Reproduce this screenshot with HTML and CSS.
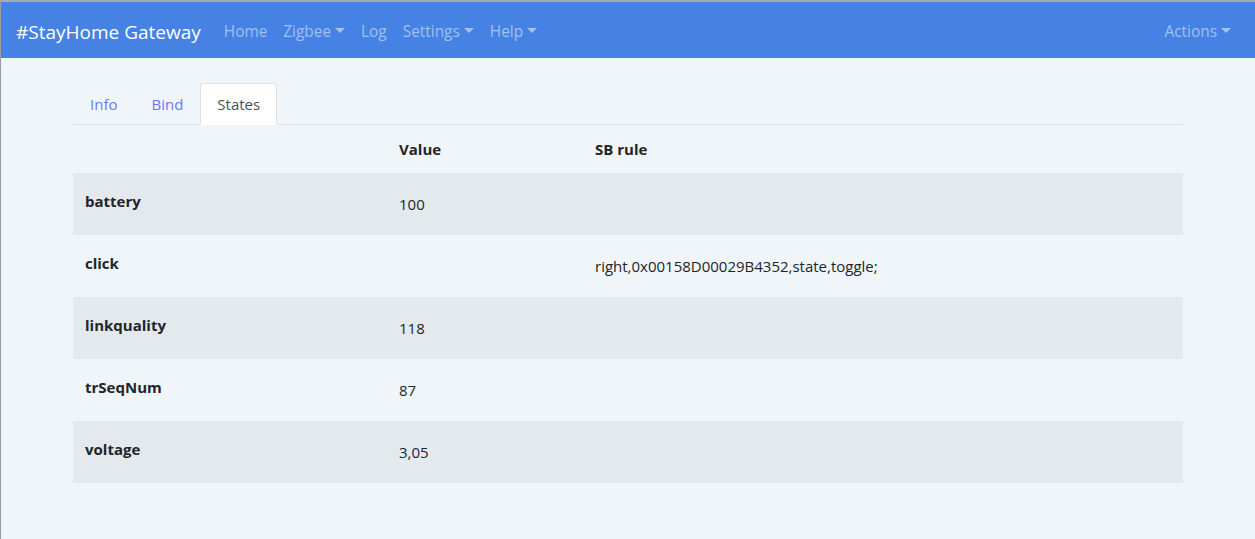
FILE: index.html
```html
<!DOCTYPE html>
<html lang="en">
<head>
<meta charset="utf-8">
<title>#StayHome Gateway</title>
<link rel="stylesheet" href="styles.css">
</head>
<body>
<nav class="navbar">
  <a class="brand" href="#">#StayHome Gateway</a>
  <ul class="nav-links">
    <li><a class="nav-link" href="#">Home</a></li>
    <li><a class="nav-link caret" href="#">Zigbee</a></li>
    <li><a class="nav-link" href="#">Log</a></li>
    <li><a class="nav-link caret" href="#">Settings</a></li>
    <li><a class="nav-link caret" href="#">Help</a></li>
  </ul>
  <ul class="nav-links nav-right">
    <li><a class="nav-link caret" href="#">Actions</a></li>
  </ul>
</nav>
<main class="container">
  <ul class="tabs">
    <li><a class="tab" href="#">Info</a></li>
    <li><a class="tab" href="#">Bind</a></li>
    <li><a class="tab active" href="#">States</a></li>
  </ul>
  <table class="states">
    <thead>
      <tr>
        <th class="c-key"></th>
        <th class="c-val">Value</th>
        <th class="c-rule">SB rule</th>
      </tr>
    </thead>
    <tbody>
      <tr class="odd"><th class="k">battery</th><td class="v">100</td><td class="r"></td></tr>
      <tr><th class="k">click</th><td class="v"></td><td class="r">right,0x00158D00029B4352,state,toggle;</td></tr>
      <tr class="odd"><th class="k">linkquality</th><td class="v">118</td><td class="r"></td></tr>
      <tr><th class="k">trSeqNum</th><td class="v">87</td><td class="r"></td></tr>
      <tr class="odd"><th class="k">voltage</th><td class="v">3,05</td><td class="r"></td></tr>
    </tbody>
  </table>
</main>
</body>
</html>
```
FILE: styles.css
```css
* { box-sizing: border-box; }
html, body { height: 100%; }
body {
  margin: 0;
  border-top: 2px solid #a9a9a9;
  border-left: 1px solid #9c9c9c;
  background: #f0f5fa;
  color: #212529;
  font-family: "Open Sans", "Noto Sans", sans-serif;
  font-size: 15px;
  line-height: 24px;
}
a { text-decoration: none; }
ul { list-style: none; margin: 0; padding: 0; }

.navbar {
  display: flex;
  align-items: center;
  height: 56px;
  padding: 10px 16px 6px 15px;
  background: #4582e3;
}
.brand {
  color: #fff;
  font-size: 19px;
  line-height: 30px;
  padding: 5px 0;
  margin-right: 15px;
  white-space: nowrap;
}
.nav-links { display: flex; }
.nav-right { margin-left: auto; }
.nav-link {
  display: block;
  padding: 8px;
  font-size: 15.4px;
  color: rgba(255, 255, 255, 0.5);
}
.caret::after {
  content: "";
  display: inline-block;
  margin-left: 4px;
  vertical-align: 4px;
  border-top: 5px solid;
  border-left: 5px solid transparent;
  border-right: 5px solid transparent;
}

.container {
  width: 1110px;
  margin: 25px auto 0;
}
.tabs {
  display: flex;
  border-bottom: 1px solid #dee2e6;
}
.tabs li { margin-bottom: -1px; }
.tab {
  display: block;
  padding: 8px 16px;
  border: 1px solid transparent;
  border-top-left-radius: 4px;
  border-top-right-radius: 4px;
  color: #6a79fa;
}
.tab.active {
  color: #495057;
  background: #fff;
  border-color: #dee2e6 #dee2e6 #fff;
}

.states {
  width: 100%;
  border-collapse: collapse;
}
.states th, .states td {
  text-align: left;
  vertical-align: top;
  padding: 12px;
}
.states thead th { font-weight: 700; }
.c-key { width: 314px; }
.c-val { width: 196px; }
.states tbody tr { height: 62px; }
.states tbody tr.odd { background: #e4e9ee; }
.states .k { font-weight: 700; padding: 16px 12px 12px; }
.states .v { padding: 19px 12px 12px; }
.states .r { padding: 19px 12px 12px; }
```
